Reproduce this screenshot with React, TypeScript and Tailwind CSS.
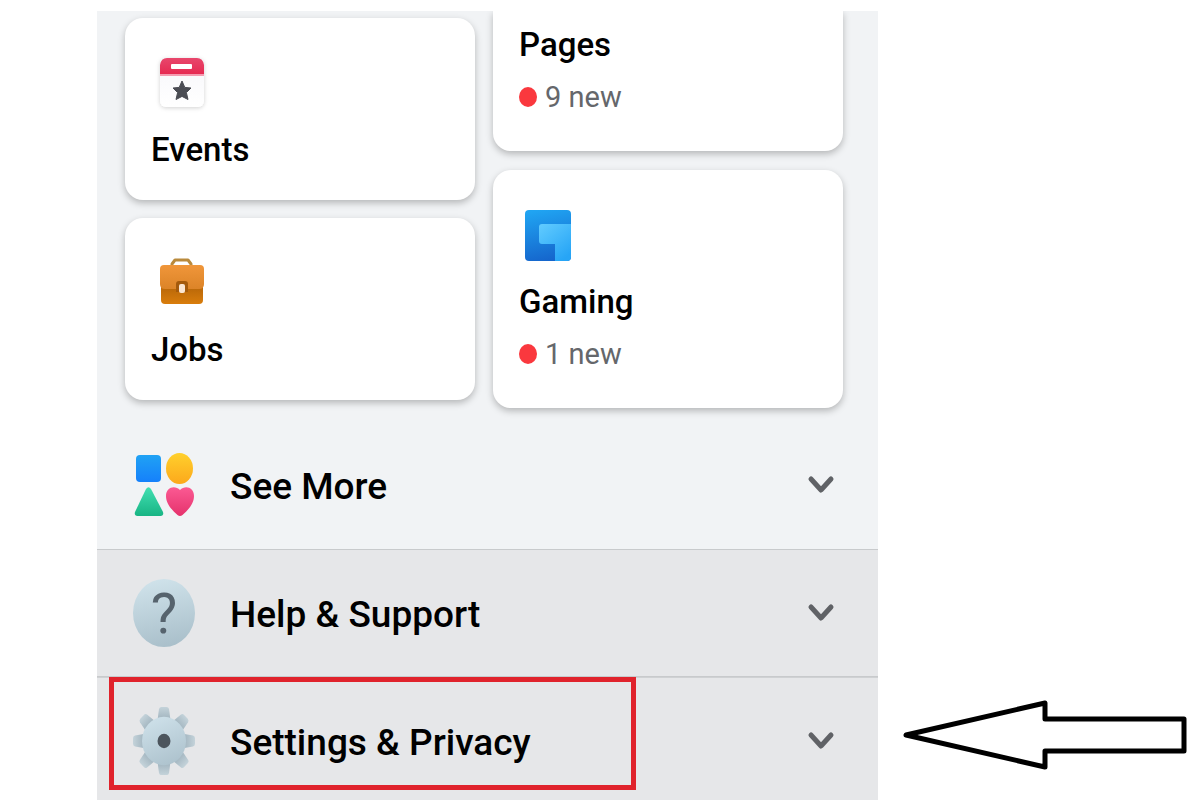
import React from "react";

interface CardProps {
  title: string;
  icon?: React.ReactNode;
  badge?: string;
  cutOff?: boolean;
}

interface MenuRowProps {
  title: string;
  icon: React.ReactNode;
  className?: string;
  highlighted?: boolean;
}

const EventsIcon = () => (
  <svg viewBox="0 0 64 64" className="block w-16 h-16" aria-hidden="true">
    <defs>
      <linearGradient id="events-top" x1="0" y1="0" x2="0" y2="1">
        <stop offset="0" stopColor="#e8476c" />
        <stop offset="1" stopColor="#e62850" />
      </linearGradient>
      <linearGradient id="events-body" x1="0" y1="0" x2="0" y2="1">
        <stop offset="0" stopColor="#f6f6fa" />
        <stop offset="1" stopColor="#ffffff" />
      </linearGradient>
      <filter id="events-shadow" x="-20%" y="-20%" width="140%" height="140%">
        <feDropShadow dx="0" dy="1" stdDeviation="2" floodOpacity="0.18" />
      </filter>
    </defs>
    <rect x="11" y="8" width="44" height="49" rx="6" fill="url(#events-body)" filter="url(#events-shadow)" />
    <path d="M11 25V15Q12 8 18 8H48Q54 8 55 15V25Z" fill="url(#events-top)" />
    <path d="M11 24H55V26H11Z" fill="#f59bb0" />
    <rect x="22" y="14" width="21" height="5" rx="1" fill="#fff" />
    <path
      d="M33 31L35.8 37.4L42 38L37.4 42.6L39 49.5L33 46.4L27 49.5L28.600 42.6L24 38L30.2 37.4Z"
      fill="#4b4d54"
      stroke="#4b4d54"
      strokeLinejoin="round"
    />
  </svg>
);

const JobsIcon = () => (
  <svg viewBox="0 0 64 64" className="block w-16 h-16" aria-hidden="true">
    <defs>
      <linearGradient id="jobs-top" x1="0" y1="0" x2="0" y2="1">
        <stop offset="0" stopColor="#f0963a" />
        <stop offset="1" stopColor="#dc8428" />
      </linearGradient>
      <linearGradient id="jobs-bottom" x1="0" y1="0" x2="0" y2="1">
        <stop offset="0.3" stopColor="#b46408" />
        <stop offset="1" stopColor="#d97d0c" />
      </linearGradient>
    </defs>
    <path d="M23 17V14L26 10H39L42 14V17" fill="none" stroke="#b98a3c" strokeWidth="3" strokeLinejoin="round" />
    <rect x="12" y="26" width="42" height="28" rx="4" fill="url(#jobs-bottom)" />
    <path d="M11 19Q11 15 15 15H51Q55 15 55 19V34Q55 39 50 39H16Q11 39 11 34Z" fill="url(#jobs-top)" />
    <path d="M27 42V34Q27 31 30 31H36Q39 31 39 34V42Z" fill="#a45a0c" />
    <rect x="30" y="34" width="6" height="9" rx="2" fill="#fbe6d2" />
  </svg>
);

const GamingIcon = () => (
  <svg viewBox="0 0 64 64" className="block w-16 h-16" aria-hidden="true">
    <defs>
      <linearGradient id="gaming-back" x1="0.3" y1="0" x2="0.5" y2="1">
        <stop offset="0" stopColor="#20a4f2" />
        <stop offset="1" stopColor="#1565cc" />
      </linearGradient>
      <linearGradient id="gaming-front" x1="0" y1="0" x2="0.7" y2="1">
        <stop offset="0" stopColor="#62ccff" />
        <stop offset="1" stopColor="#27a5f6" />
      </linearGradient>
    </defs>
    <rect x="8" y="8" width="46" height="51" rx="4" fill="url(#gaming-back)" />
    <path d="M22 25Q22 22 25 22H54V55Q54 59 50 59H38V42H25Q22 42 22 39Z" fill="url(#gaming-front)" />
  </svg>
);

const SeeMoreIcon = () => (
  <svg viewBox="0 0 64 72" className="block w-16 h-[72px] shrink-0" aria-hidden="true">
    <defs>
      <linearGradient id="more-square" x1="0" y1="0" x2="0" y2="1">
        <stop offset="0" stopColor="#20a2f4" />
        <stop offset="1" stopColor="#1580fb" />
      </linearGradient>
      <linearGradient id="more-circle" x1="0" y1="0" x2="0" y2="1">
        <stop offset="0" stopColor="#ffd02c" />
        <stop offset="1" stopColor="#fca81c" />
      </linearGradient>
      <linearGradient id="more-triangle" x1="0" y1="0" x2="0" y2="1">
        <stop offset="0" stopColor="#42dfb2" />
        <stop offset="1" stopColor="#18b484" />
      </linearGradient>
      <linearGradient id="more-heart" x1="0" y1="0" x2="0" y2="1">
        <stop offset="0" stopColor="#fb5a93" />
        <stop offset="1" stopColor="#e5326c" />
      </linearGradient>
    </defs>
    <rect x="4" y="6" width="25" height="27" rx="4" fill="url(#more-square)" />
    <ellipse cx="47.5" cy="19.5" rx="13.5" ry="15.5" fill="url(#more-circle)" />
    <path d="M14 40Q16.5 36.5 19 40L31 63Q32 67 28.5 67H5.5Q2 67 3 63Z" fill="url(#more-triangle)" />
    <path
      d="M48 41C43 36 34 38 34 47C34 55 40 61 45.5 66Q48 68 50.5 66C56 61 62 55 62 47C62 38 53 36 48 41Z"
      fill="url(#more-heart)"
    />
  </svg>
);

const HelpIcon = () => (
  <svg viewBox="0 0 64 72" className="block w-16 h-[72px] shrink-0" aria-hidden="true">
    <defs>
      <linearGradient id="help-back" x1="0.4" y1="0" x2="0.6" y2="1">
        <stop offset="0" stopColor="#cfe2ea" />
        <stop offset="1" stopColor="#a9bfca" />
      </linearGradient>
    </defs>
    <ellipse cx="32" cy="36" rx="31" ry="34" fill="url(#help-back)" />
    <text x="32" y="56" textAnchor="middle" fontSize="56" fill="#56636d" className="font-['Roboto',sans-serif]">
      ?
    </text>
  </svg>
);

const GEAR_ANGLES = [0, 45, 90, 135, 180, 225, 270, 315];

const SettingsIcon = () => (
  <svg viewBox="0 0 64 72" className="block w-16 h-[72px] shrink-0" aria-hidden="true">
    <defs>
      <linearGradient id="gear-body" x1="0.3" y1="0" x2="0.7" y2="1">
        <stop offset="0" stopColor="#cde0e9" />
        <stop offset="1" stopColor="#adc2cd" />
      </linearGradient>
      <linearGradient id="gear-tooth" x1="0" y1="0" x2="0" y2="1">
        <stop offset="0" stopColor="#c4d3da" />
        <stop offset="1" stopColor="#9fb2bd" />
      </linearGradient>
    </defs>
    <g transform="translate(32 36) scale(1 1.1)">
      {GEAR_ANGLES.map((angle) => (
        <path
          key={angle}
          d="M-6.5 -19L-5 -29Q-4.500 -31 -2.5 -31H2.5Q4.500 -31 5 -29L6.5 -19Z"
          transform={`rotate(${angle})`}
          fill="url(#gear-tooth)"
        />
      ))}
      <circle r="22" fill="url(#gear-body)" />
      <circle r="6.5" fill="#4c555d" />
    </g>
  </svg>
);

const Chevron = () => (
  <svg viewBox="0 0 28 24" className="block w-7 h-6 shrink-0" aria-hidden="true">
    <path
      d="M4 6L14 17L24 6"
      fill="none"
      stroke="#606266"
      strokeWidth="5"
      strokeLinecap="round"
      strokeLinejoin="round"
    />
  </svg>
);

const Card: React.FC<CardProps> = ({ title, icon, badge, cutOff }) => (
  <button
    type="button"
    className={`block w-full px-6 bg-white text-left shadow-[0_3px_7px_rgba(0,0,0,0.25)] ${
      cutOff ? "rounded-b-[18px] pt-[14px]" : "rounded-[18px] pt-8"
    } ${badge ? "pb-[34px]" : "pb-[30px]"}`}
  >
    {icon && <div className="mb-4">{icon}</div>}
    <div className="pl-[2px] text-[33px] leading-10 font-medium text-black">{title}</div>
    {badge && (
      <div className="mt-3 pl-[2px] flex items-center gap-2">
        <span className="w-[18px] h-5 rounded-[50%] bg-[#fa383e]" />
        <span className="text-[29px] leading-10 text-[#65676b]">{badge}</span>
      </div>
    )}
  </button>
);

const MenuRow: React.FC<MenuRowProps> = ({ title, icon, className, highlighted }) => (
  <button
    type="button"
    className={`relative flex w-full items-center pl-[35px] pr-[43px] py-7 text-left ${className || ""}`}
  >
    {icon}
    <span className="flex-1 pl-[34px] pt-1 text-[37px] leading-10 font-medium text-black">{title}</span>
    <Chevron />
    {highlighted && (
      <span className="absolute left-3 top-0 h-[113px] w-[67.5%] border-[5px] border-[#e0232c]" />
    )}
  </button>
);

const App: React.FC = () => {
  return (
    <div className="grid grid-cols-[97fr_781fr_322fr] h-screen overflow-hidden bg-white font-['Roboto',sans-serif]">
      <main className="col-start-2 mt-[11px] overflow-hidden bg-[#f1f3f5]">
        <div className="grid grid-cols-2 gap-[18px] pl-7 pr-[35px]">
          <div className="flex flex-col gap-[18px] pt-[7px]">
            <Card title="Events" icon={<EventsIcon />} />
            <Card title="Jobs" icon={<JobsIcon />} />
          </div>
          <div className="flex flex-col gap-[19px]">
            <Card title="Pages" badge="9 new" cutOff />
            <Card title="Gaming" icon={<GamingIcon />} badge="1 new" />
          </div>
        </div>

        <div className="mt-[13px]">
          <MenuRow title="See More" icon={<SeeMoreIcon />} />
          <MenuRow
            title="Help & Support"
            icon={<HelpIcon />}
            className="bg-[#e6e7e9] shadow-[inset_0_1px_0_#c8cacc]"
          />
          <MenuRow
            title="Settings & Privacy"
            icon={<SettingsIcon />}
            className="bg-[#e6e7e9] shadow-[0_-1px_0_#c8cacc,inset_0_1px_0_#cfd1d3]"
            highlighted
          />
        </div>
      </main>

      <div className="flex flex-col justify-end pl-6 pr-[13px] pb-[29px]">
        <svg viewBox="0 0 285 72" className="block w-full" aria-hidden="true">
          <path
            d="M4 36L143 4V20H282V52H143V68Z"
            fill="#fff"
            stroke="#000"
            strokeWidth="5"
            strokeLinejoin="round"
          />
        </svg>
      </div>
    </div>
  );
};

export default App;
